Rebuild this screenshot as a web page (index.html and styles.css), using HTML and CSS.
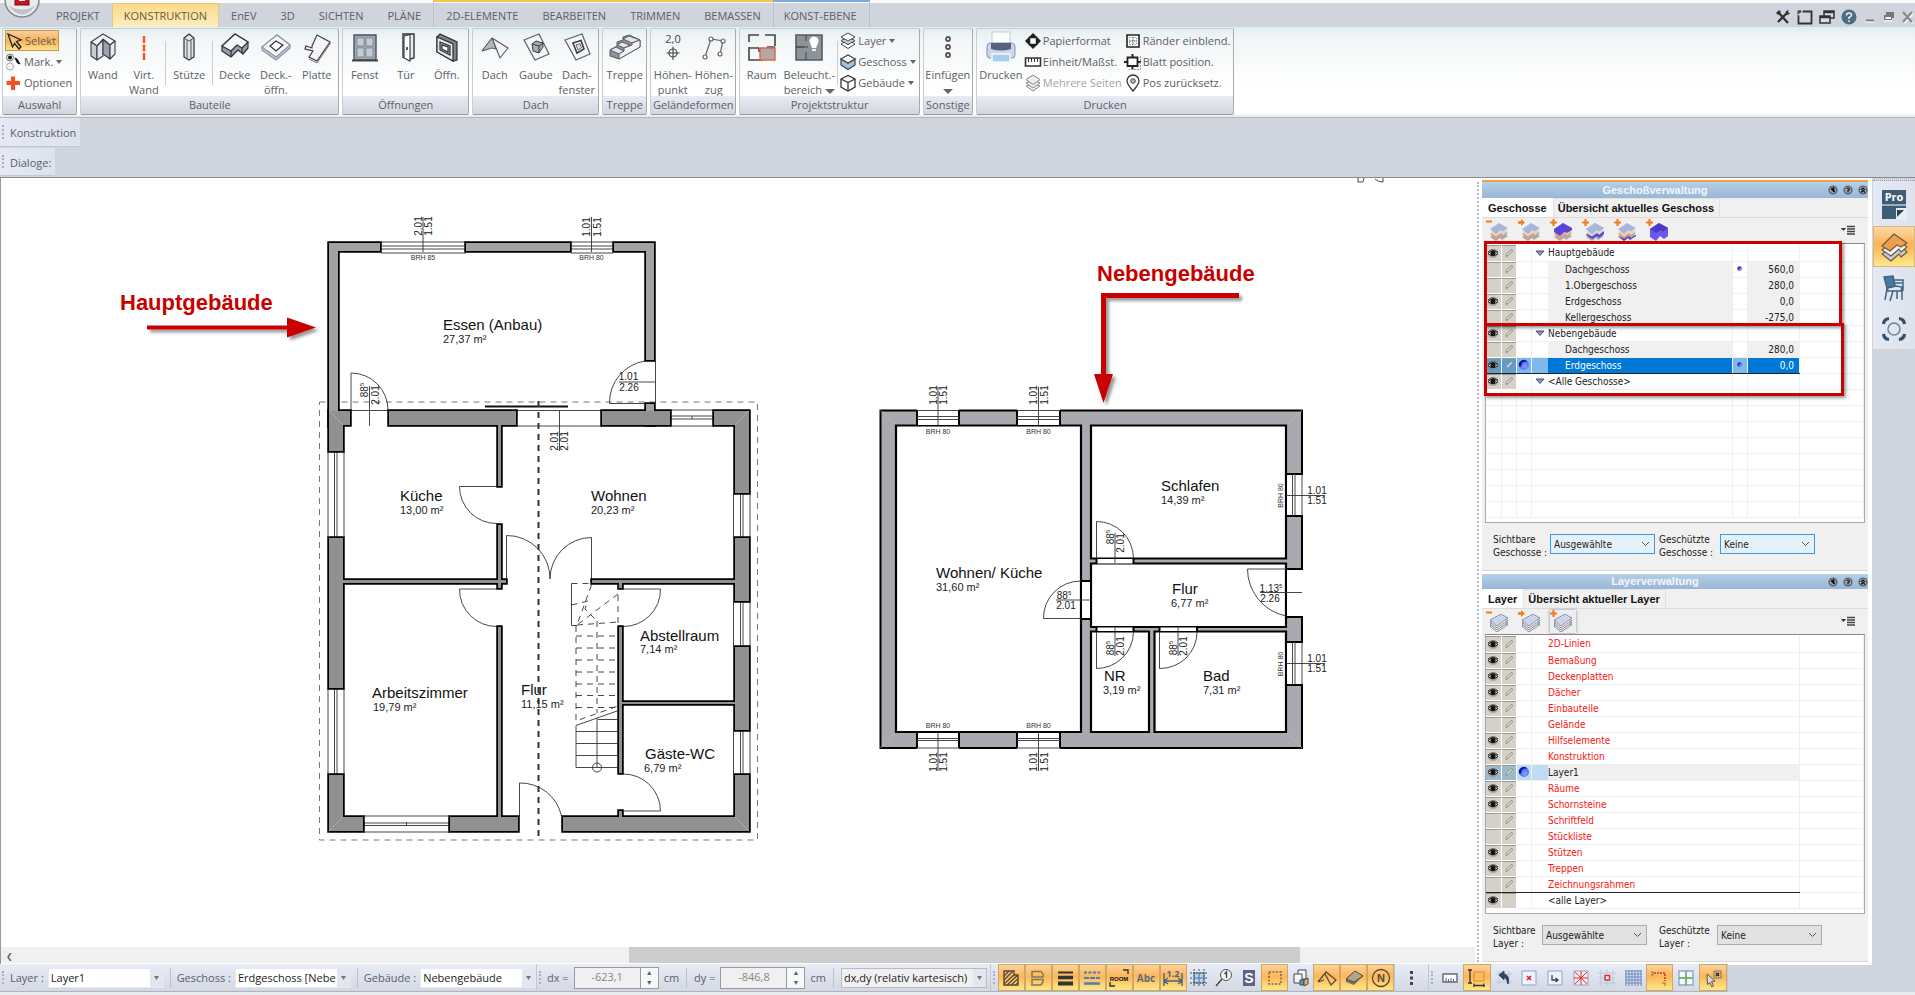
FILE: index.html
```html
<!DOCTYPE html>
<html lang="de">
<head>
<meta charset="utf-8">
<title>Geschoßverwaltung</title>
<link rel="stylesheet" href="styles.css">
</head>
<body>
<svg class="defs" aria-hidden="true">
  <symbol id="eye" viewBox="0 0 14 14"><ellipse cx="7" cy="8" rx="5" ry="4" fill="#8a8780" opacity=".6"/><path d="M2 7.5Q7 2 12 7.5Q7 12 2 7.5Z" fill="#e8e6e0" stroke="#222" stroke-width="1"/><circle cx="7" cy="7.2" r="2.6" fill="#111"/><path d="M2 6Q7 1.500 12 6" fill="none" stroke="#444"/></symbol>
  <symbol id="pen" viewBox="0 0 14 14"><path d="M4 10.500L4.500 8L9 3.500Q10.500 3 10.500 5L6 9.700Z" fill="#dcd8d0" stroke="#8d8a84" stroke-width=".9"/></symbol>
  <symbol id="ball" viewBox="0 0 14 14"><circle cx="7" cy="7" r="5" fill="#5a78ff"/><path d="M2.300 9A5 5 0 0 1 10.500 3.500Q4.500 3 4.500 7Q4 9 2.300 9Z" fill="#0a1a8c"/><circle cx="8" cy="8.500" r="2.500" fill="#7d93ff"/></symbol>
  <symbol id="dot" viewBox="0 0 14 14"><circle cx="6.500" cy="6.500" r="2.200" fill="#3535d8"/><circle cx="7.200" cy="7.200" r="1" fill="#9a9aff"/></symbol>
  <symbol id="tri" viewBox="0 0 14 14"><path d="M3 5H11L7 9.500Z" fill="#8e8edb" stroke="#444466" stroke-width=".9"/></symbol>
  <symbol id="pin" viewBox="0 0 10 10"><circle cx="5" cy="5" r="4.600" fill="#5d6673"/><circle cx="5" cy="5" r="3" fill="#99a5b3"/><path d="M3 4L6 2.500V7Z M5 5L7 7" stroke="#111" fill="#111"/></symbol>
  <symbol id="hlp" viewBox="0 0 10 10"><circle cx="5" cy="5" r="4.600" fill="#5d6673"/><circle cx="5" cy="5" r="3.200" fill="#99a5b3"/><path d="M3.500 4Q5 2 6.500 4Q6.500 5 5 5.500V7.500" stroke="#111" fill="none" stroke-width="1.200"/></symbol>
  <symbol id="col" viewBox="0 0 10 10"><circle cx="5" cy="5" r="4.600" fill="#5d6673"/><circle cx="5" cy="5" r="3.200" fill="#99a5b3"/><path d="M3 5L5 3L7 5M3 7.500L5 5.500L7 7.500" stroke="#111" fill="none" stroke-width="1.200"/></symbol>
  <symbol id="menu" viewBox="0 0 16 10"><path d="M1 3H6L3.500 6Z" fill="#333"/><path d="M7 1.500H15M7 4H15M7 6.500H15M7 9H15" stroke="#444" stroke-width="1.600"/></symbol>
  <symbol id="floors" viewBox="0 0 20 18"><path d="M1 14L10 8L19 13L13 17L11 15L7 18Z" fill="#a4abb8"/><path d="M1 11L11 6L19 10L14 14L12 12.500L7 16Z" fill="#ee9a5c"/><path d="M1 9L11 4L19 8L14 12L12 10L7 13.500Z" fill="#d6d9e0"/><path d="M1 6L10 0L19 5L14 8.500L11.500 7L7 11Z" fill="#a9b6d6"/></symbol>
  <symbol id="sheets" viewBox="0 0 20 18"><g stroke="#777d88" stroke-width=".9" fill="#f6f7fb"><path d="M1 12L12 8L19 10.500L8 18Z"/><path d="M1 10L12 6L19 8.500L8 16Z"/><path d="M1 8L12 4L19 6.500L8 14Z"/></g><path d="M1 6L12 0L19 4L8 12Z" fill="#cdd3e8" stroke="#858c9c" stroke-width=".9"/></symbol>
  <symbol id="plus" viewBox="0 0 7 7"><path d="M3.500 0V7M0 3.500H7" stroke="#f57c1f" stroke-width="2.200"/></symbol>
  <symbol id="minus" viewBox="0 0 7 7"><path d="M0 2.500H6" stroke="#f57c1f" stroke-width="2"/></symbol>
  <symbol id="arrow" viewBox="0 0 7 7"><path d="M0 3.500H4" stroke="#f57c1f" stroke-width="2.600"/><path d="M3 0L7 3.500L3 7Z" fill="#f57c1f"/></symbol>
</svg>

<header class="tabbar">
  <button class="app" aria-label="Anwendungsmenü"><svg viewBox="0 0 36 20" width="36" height="20"><circle cx="18" cy="0" r="17" fill="#e9ebee" stroke="#83868c" stroke-width="1.500"/><path d="M4 5Q18 24 32 5Q18 14 4 5Z" fill="#bfc3ca"/><rect x="11" y="-8" width="14" height="13" fill="#c3161c" stroke="#7c0c10"/><rect x="15" y="-2" width="6" height="3" fill="#fff"/></svg></button>
  <nav class="tabs">
    <button>PROJEKT</button><button class="on">KONSTRUKTION</button><button>EnEV</button><button>3D</button><button>SICHTEN</button><button>PLÄNE</button>
    <span class="ctx gold"><button>2D-ELEMENTE</button><button>BEARBEITEN</button><button>TRIMMEN</button><button>BEMASSEN</button></span>
    <span class="ctx blue"><button>KONST-EBENE</button></span>
  </nav>
  <div class="wintools">
    <button aria-label="Werkzeuge"><svg viewBox="0 0 16 16"><path d="M3 3L13 14M13 3L3 13" stroke="#333" stroke-width="2.400"/><path d="M1 4L4 1L6 3L3 6ZM11 2L14 1L12.500 3.500L15 4L13 6L10.500 5Z" fill="#333"/></svg></button>
    <button aria-label="Fenster"><svg viewBox="0 0 16 16"><path d="M1.500 2.500H14.500V14.500H1.500Z" stroke="#333" stroke-width="1.800" fill="none"/><path d="M5 1V6M1 5.500H5" stroke="#d0d4dd" stroke-width="1.500"/></svg></button>
    <button aria-label="Kaskade"><svg viewBox="0 0 16 16" fill="#d8dbe3" stroke="#333" stroke-width="1.500"><path d="M5 2H15V9H5ZM5 3.500H15"/><path d="M1 7H11V14H1ZM1 8.500H11"/></svg></button>
    <button aria-label="Hilfe"><svg viewBox="0 0 16 16"><circle cx="8" cy="8" r="7.500" fill="#4d6b82"/><path d="M5.500 6.500Q5.500 4 8 4Q10.500 4 10.500 6Q10.500 7.500 8 8.500V10M8 11.200V13" stroke="#e8edf0" stroke-width="1.600" fill="none"/></svg></button>
    <button aria-label="Minimieren"><svg viewBox="0 0 16 16"><path d="M3 11.500H11" stroke="#777" stroke-width="2"/><path d="M3 13H11" stroke="#fff"/></svg></button>
    <button class="near" aria-label="Wiederherstellen"><svg viewBox="0 0 16 16"><path d="M5 3H13V9H11V11H3V6H5Z" fill="#777"/><path d="M4.500 8H10V10H4.500Z" fill="#fff"/><path d="M3 12H11" stroke="#fff"/></svg></button>
    <button class="near" aria-label="Schließen"><svg viewBox="0 0 16 16"><path d="M5 4L14 14M14 4L5 14" stroke="#fff" stroke-width="2.200"/><path d="M4 3L13 13M13 3L4 13" stroke="#888" stroke-width="2.200"/></svg></button>
  </div>
</header>

<section class="ribbon">
  <div class="group">
    <div class="body col">
      <button class="row sel"><svg viewBox="0 0 18 18"><path d="M2 2L15 8L10.500 9.500L15 15L13 17L8.500 11.500L6.500 15Z" fill="#f5c27a" stroke="#222" stroke-width="1.300"/></svg>Selekt</button>
      <button class="row"><svg viewBox="0 0 18 18"><circle cx="5" cy="4.500" r="3.500" fill="#eee" stroke="#777"/><circle cx="5" cy="4.500" r="2" fill="#111"/><circle cx="5" cy="13.500" r="3.500" fill="#f6f6f6" stroke="#aaa"/><path d="M10 5L12 6L15 11L12.500 10Z" fill="#111" stroke="#111"/></svg>Mark. <i class="dd"></i></button>
      <button class="row"><svg viewBox="0 0 18 18"><path d="M8 2.500V16M1.500 9H15" stroke="#f4511e" stroke-width="4"/></svg>Optionen</button>
    </div><h2>Auswahl</h2>
  </div>
  <div class="group">
    <div class="body">
      <button class="big"><svg viewBox="0 0 30 30"><g stroke="#3d4048" stroke-width="1.100" stroke-linejoin="round"><path d="M3 10L15 2L27 9L22 13L15 7L9 14Z" fill="#f4f5f8"/><path d="M3 10L9 14V28L3 24Z" fill="#c9cbd3"/><path d="M9 14L15 8V24L9 28Z" fill="#dfe1e7"/><path d="M15 8L22 13V27L15 22Z" fill="#9ea2ad"/><path d="M22 13L27 9V22L22 27Z" fill="#e8e9ee"/></g></svg>Wand</button>
      <button class="big"><svg viewBox="0 0 30 30"><path d="M15 4V28" stroke="#f4511e" stroke-width="2.400" stroke-dasharray="7 1.500"/></svg>Virt.<br>Wand</button>
      <span class="sep"></span>
      <button class="big mid"><svg viewBox="0 0 30 30"><path d="M10 6L15 2L20 6V25L15 28L10 25Z" fill="#e2e4e9" stroke="#2e3036" stroke-width="1.200"/><path d="M10 6L15 9L20 6M13 8V26M17 8V26" fill="none" stroke="#55585f"/></svg>Stütze</button>
      <span class="sep"></span>
      <button class="big"><svg viewBox="0 0 30 30"><g stroke="#2f3238" stroke-width="1.200" stroke-linejoin="round"><path d="M2 14L15 2L28 10V16L23 22L18 18L11 25L2 19Z" fill="#9b9ea8"/><path d="M2 14L15 2L28 10L22 16L17 13L11 19Z" fill="#f6f7f9"/><path d="M11 19V25M22 16V21"/></g></svg>Decke</button>
      <button class="big"><svg viewBox="0 0 30 30"><g stroke="#8b93a5" stroke-width="1.100" stroke-linejoin="round"><path d="M1 15L16 3L29 13V16L15 28L1 18Z" fill="#c7ccd8"/><path d="M1 15L16 3L29 13L15 25Z" fill="#f8f9fb"/></g><path d="M9 14L15 9L22 13L15 19Z" fill="#fff" stroke="#333" stroke-width="1.200"/></svg>Deck.-<br>öffn.</button>
      <button class="big"><svg viewBox="0 0 30 30"><path d="M10 14L15 3L28 10L15 29L7 25L11 19L3 17L4 14L10 16Z" fill="#f5f5f7" stroke="#3b3e45" stroke-width="1.200"/><path d="M28 10V12L15 31L7 27" fill="none" stroke="#777"/></svg>Platte</button>
    </div><h2>Bauteile</h2>
  </div>
  <div class="group">
    <div class="body">
      <button class="big"><svg viewBox="0 0 30 30"><path d="M4 3H26V28H4Z" fill="#a1a7b0" stroke="#4d525b" stroke-width="1.400"/><path d="M7 6H14V14H7ZM16 6H23V14H16ZM7 16H14V25H7ZM16 16H23V25H16Z" fill="#c3cbd8" stroke="#6b7280" stroke-width=".6"/><path d="M2 28.500H28" stroke="#444" stroke-width="2"/></svg>Fenst</button>
      <button class="big"><svg viewBox="0 0 30 30"><path d="M12 26V2H23V26L19 27" fill="#e8e9ec" stroke="#33363c" stroke-width="1.400"/><path d="M13 4L19 2.500V29L13 26Z" fill="#fff" stroke="#33363c" stroke-width="1.100"/><path d="M16 15V18" stroke="#222" stroke-width="1.500"/></svg>Tür</button>
      <button class="big"><svg viewBox="0 0 30 30"><g stroke="#2c2f35" stroke-width="1.200"><path d="M5 5L8 2L25 10V28L21 29L5 20Z" fill="#7e828c"/><path d="M5 5L21 12V29L5 20Z" fill="#e6e8ec"/><path d="M8 10L18 14V23L8 18Z" fill="#a8acb5"/><path d="M10 13L16 15V20L10 17Z" fill="#fff"/></g></svg>Öffn.</button>
    </div><h2>Öffnungen</h2>
  </div>
  <div class="group">
    <div class="body">
      <button class="big"><svg viewBox="0 0 30 30"><path d="M2 19L12 6L28 16L20 26L12 6" fill="#f4f5f7" stroke="#55585f" stroke-width="1.100" stroke-linejoin="round"/><path d="M2 19L12 6L16 17L12 16Z" fill="#b3b6bd" stroke="#55585f"/></svg>Dach</button>
      <button class="big"><svg viewBox="0 0 30 30"><path d="M3 8L18 2L28 22L14 28Z" fill="#f5f6f8" stroke="#5c5f66" stroke-width="1.200"/><path d="M11 12L15 9L22 11V15L18 21L12 19Z" fill="#a6a9b1" stroke="#3a3d43"/><path d="M11 12L18 14V21M18 14L22 11" fill="none" stroke="#3a3d43"/></svg>Gaube</button>
      <button class="big"><svg viewBox="0 0 30 30"><path d="M3 8L20 2L28 22L14 28Z" fill="#f5f6f8" stroke="#5c5f66" stroke-width="1.200"/><path d="M11 11L19 8.500L22 17L15 21Z" fill="#fff" stroke="#3a3d43" stroke-width="1.600"/><path d="M14 13L18 11.500L19.500 16L16 18Z" fill="#ddd" stroke="#666"/></svg>Dach-<br>fenster</button>
    </div><h2>Dach</h2>
  </div>
  <div class="group">
    <div class="body">
      <button class="big"><svg viewBox="0 0 30 30"><g stroke="#5a5d64" stroke-width="1" stroke-linejoin="round"><path d="M0 18L7 14V10L13 8V5L19 3L30 8V15L9 27L0 24Z" fill="#8f929b"/><path d="M0 18L6 15L14 19L9 22ZM7 13L12 10L20 13L14 16ZM13 7L19 4L30 8L22 11Z" fill="#e3e5ea"/><path d="M9 22L14 19V16L22 13V11L30 8V15L9 27Z" fill="#f3f4f6"/></g></svg>Treppe</button>
    </div><h2>Treppe</h2>
  </div>
  <div class="group">
    <div class="body">
      <button class="big"><svg viewBox="0 0 30 30"><text x="15" y="11" text-anchor="middle" class="ictext">2,0</text><circle cx="15" cy="21" r="4" fill="none" stroke="#444" stroke-width="1.200"/><path d="M15 14.500V28M8.500 21H21.500" stroke="#444" stroke-width="1.100"/></svg>Höhen-<br>punkt</button>
      <button class="big"><svg viewBox="0 0 30 30"><path d="M6 25L12 7L24 9L21 22" fill="none" stroke="#666" stroke-width="1.200"/><g fill="#fff" stroke="#666" stroke-width="1.200"><circle cx="6" cy="25" r="2"/><circle cx="12" cy="7" r="2"/><circle cx="24" cy="9" r="2"/><circle cx="21" cy="22" r="2"/></g></svg>Höhen-<br>zug</button>
    </div><h2>Geländeformen</h2>
  </div>
  <div class="group">
    <div class="body">
      <button class="big"><svg viewBox="0 0 30 30"><path d="M2 10V3H12M18 3H28V14M2 15V28H16M2 16H12M20 15H28M12 16V20" fill="none" stroke="#444" stroke-width="1.600"/><path d="M13 16H28V28H13Z" fill="#b8a6a4" stroke="#d2694a" stroke-width="1.400"/></svg>Raum</button>
      <button class="big wide"><svg viewBox="0 0 30 30"><path d="M2 3H28V28H2Z" fill="#8d9499" stroke="#555b60" stroke-width="1.600"/><path d="M2 15H10M12 3V9M12 20V28M2 15H14" stroke="#444"/><path d="M16 11A4.500 4.500 0 1 1 24 11L22 16H18Z" fill="#fff"/><path d="M18 17H22V19H18Z" fill="#eee"/></svg>Beleucht.-<br>bereich <i class="dd lg"></i></button>
      <span class="sep"></span>
      <div class="col">
        <button class="row"><svg viewBox="0 0 18 18" fill="#fff" stroke="#444"><path d="M2 12L9 8L16 12L9 16.500Z"/><path d="M2 8.500L9 5L16 8.500L9 12.500Z" fill="#b9d3e6"/><path d="M2 5L9 1L16 5L9 9Z"/></svg>Layer <i class="dd"></i></button>
        <button class="row"><svg viewBox="0 0 18 18" fill="#9cc3e0" stroke="#444" stroke-width="1.200"><path d="M2 6V12L9 16.500L16 12V6L9 10Z"/><path d="M2 6L9 2L16 6L9 10Z" fill="#fff"/></svg>Geschoss <i class="dd"></i></button>
        <button class="row"><svg viewBox="0 0 18 18" fill="#fff" stroke="#333" stroke-width="1.300"><path d="M2 5L9 1.500L16 5V13L9 17L2 13Z"/><path d="M2 5L9 8.500L16 5M9 8.500V17"/></svg>Gebäude <i class="dd"></i></button>
      </div>
    </div><h2>Projektstruktur</h2>
  </div>
  <div class="group">
    <div class="body">
      <button class="big insert"><svg viewBox="0 0 30 30" fill="#fff" stroke="#555" stroke-width="1.800"><circle cx="15" cy="7" r="2"/><circle cx="15" cy="15" r="2"/><circle cx="15" cy="23" r="2"/></svg>Einfügen<br><i class="dd lg"></i></button>
    </div><h2>Sonstige</h2>
  </div>
  <div class="group">
    <div class="body">
      <button class="big insert"><svg viewBox="0 0 30 30"><path d="M6 0H24V14H6Z" fill="#fbfcfe" stroke="#c5cad6"/><path d="M1 15Q1 11 4 11H26Q29 11 29 15V23Q29 26 26 26H4Q1 26 1 23Z" fill="#ccd6ea" stroke="#8593b3"/><path d="M5 11H25V17Q15 20 5 17Z" fill="#56627f"/><path d="M6 22H24V30H6Z" fill="#a8cbf2" stroke="#f4f7fb" stroke-width="1.500"/></svg>Drucken</button>
      <div class="col">
        <button class="row"><svg viewBox="0 0 18 18"><path d="M9 1L13 5H5ZM9 17L13 13H5ZM1 9L5 5V13ZM17 9L13 5V13Z" fill="#222"/><path d="M5.500 5.500H12.500V12.500H5.500Z" fill="#fff" stroke="#222" stroke-width="1.500"/></svg>Papierformat</button>
        <button class="row"><svg viewBox="0 0 18 18"><path d="M1.500 5H16.500V13H1.500Z" fill="#fff" stroke="#333" stroke-width="1.600"/><path d="M4.500 5V9M7.500 5V9M10.500 5V9M13.500 5V9" stroke="#333"/></svg>Einheit/Maßst.</button>
        <button class="row" disabled><svg viewBox="0 0 18 18" fill="#eee" stroke="#888"><path d="M2 12L9 9L16 12L9 17Z"/><path d="M2 9L9 6L16 9L9 14Z"/><path d="M2 5.500L9 1L16 5.500L9 10.500Z"/></svg>Mehrere Seiten</button>
      </div>
      <div class="col">
        <button class="row"><svg viewBox="0 0 18 18"><path d="M3 3H15V15H3Z" fill="#fff" stroke="#222" stroke-width="1.600"/><path d="M9 5V13M5 9H13" stroke="#444" stroke-dasharray="1.500 1"/><path d="M5.500 5.500H12.500V12.500H5.500Z" fill="none" stroke="#777" stroke-dasharray="1 1.500"/></svg>Ränder einblend.</button>
        <button class="row"><svg viewBox="0 0 18 18"><path d="M3.500 4.500H13.500V13H3.500Z" fill="#fff" stroke="#222" stroke-width="1.800"/><path d="M8.500 1V4M8.500 13V16.500M0 9H3M14 9H17" stroke="#222" stroke-width="2"/><path d="M16.500 3V16.500H5" fill="none" stroke="#999" stroke-dasharray="2 1"/></svg>Blatt position.</button>
        <button class="row"><svg viewBox="0 0 18 18"><path d="M9 17Q3 10 3 7A6 6 0 0 1 15 7Q15 10 9 17Z" fill="#fff" stroke="#333" stroke-width="1.300"/><circle cx="9" cy="7" r="2.300" fill="#bbb" stroke="#444"/></svg>Pos zurücksetz.</button>
      </div>
    </div><h2>Drucken</h2>
  </div>
</section>

<div class="dock"><div class="strip">Konstruktion</div><div class="strip">Dialoge:</div></div>

<main class="work">
  <section class="canvas">
    <svg class="plan" viewBox="1 177 1474 768" preserveAspectRatio="xMinYMin meet">
      <defs>
        <filter id="sh" x="-20%" y="-20%" width="150%" height="150%"><feDropShadow dx="3" dy="3" stdDeviation="1.500" flood-color="#000" flood-opacity=".4"/></filter>
        <path id="w1" d="M329 242H380V250H338V425H329ZM466 242H570V250H466ZM614 242H654V359H646V250H614ZM646 403H654V424H646Z"/>
        <path id="w2" d="M329 410H350V424H343V450H329ZM389 410H516V424H389ZM602 410H670V424H602ZM714 410H749V492H735V424H714ZM329 537H343V687H329ZM329 774H343V816H363V830H329ZM735 537H749V600H735ZM735 646H749V729H735ZM735 774H749V830H735ZM450 816H518V830H450ZM563 816H749V830H563ZM498 424H501V485H498ZM498 524H501V587H498ZM498 626H501V817H498ZM343 579H506V582H343ZM592 579H735V582H592ZM619 582H622V587H619ZM619 626H622V772H619ZM619 810H622V817H619ZM622 701H735V703H622Z"/>
      </defs>
      <path d="M1358 181H1363L1364 177M1358 181V177M1375 178Q1378 181 1383 181V177" class="thin"/>

      <!-- Hauptgebäude -->
      <path class="roof" d="M319.500 401H757.500V839H319.500Z"/>
      <path class="thin" d="M381 241H466M381 252H466M381 245H466M381 248H466M423 216V251M571 241H613M571 252H613M571 245H613M571 248H613M591.500 216V251M671 409H714M671 425H714M671 415H714M671 418H714M692 415V418M655.500 360V402M328 451V536M344 451V536M334.500 451V536M337 451V536M328 688V773M344 688V773M334.500 688V773M337 688V773M750 493V536M733.500 493V536M740.500 493V536M743 493V536M750 601V645M733.500 601V645M740.500 601V645M743 601V645M750 730V773M733.500 730V773M740.500 730V773M743 730V773M364 815H449M364 831H449M364 822H449M364 824.500H449M406.500 821V825"/>
      <path class="thin" d="M338 409.500H388M517 409.500H602M517 425H602M351 409V372A37 37 0 0 1 388 409M369.500 385V425M645 360A42 42 0 0 0 609.500 402.500H655M619 381H655M559.500 410V450M497 485.500H459.500A37 37 0 0 0 497 522.500M497 588H459.500A37 37 0 0 0 497 625.500M506.500 578V534.500A43 43 0 0 1 550 578A41.500 41.500 0 0 1 591.500 536.500V578M623 588H660.500A37 37 0 0 1 623 625.500M623 810H660.500A37 37 0 0 0 623 773M519.500 816V782A42 42 0 0 1 561.500 815"/>
      <path d="M485 405.500H568" stroke="#111" stroke-width="2"/>
      <use href="#w1" class="wall-line"/><use href="#w2" class="wall-line"/><use href="#w1" fill="#a2a2a2"/><use href="#w2" fill="#919191"/>
      <path class="ridge" d="M538.500 400V839"/>
      <path d="M329 410L343 424M749 410L735 424M329 830L343 816M749 830L735 816" stroke="#b5b5b5" stroke-width=".7"/>
      <path class="thin" d="M576 766.500V724.500L617 710M576 730.500H617M576 742.500H617M576 754.500H617M576 766.500H617M598 718.500H617M597 717V766"/><circle cx="597" cy="766.500" r="4.500" class="thin"/>
      <path class="thin dash" d="M576 635H617M576 647H617M576 659H617M576 671H617M576 683H617M576 694.500H617M576 706.500H617M576 625V720L618 705M597 620V712M571.500 582.500H592L577 624L618 593M577 624L618 621M618 583V622M571.500 604L588 600L585 608L597 620"/>
      <path class="thin" d="M571.500 582.500V624.500H577"/>
      <g class="room">
        <text x="443" y="329">Essen (Anbau)</text><text x="400" y="500">Küche</text><text x="591" y="500">Wohnen</text><text x="372" y="697">Arbeitszimmer</text><text x="521" y="694">Flur</text><text x="640" y="640">Abstellraum</text><text x="645" y="758">Gäste-WC</text>
      </g>
      <g class="area">
        <text x="443" y="342">27,37 m²</text><text x="400" y="513">13,00 m²</text><text x="591" y="513">20,23 m²</text><text x="373" y="710">19,79 m²</text><text x="521" y="707">11,15 m²</text><text x="640" y="652">7,14 m²</text><text x="644" y="771">6,79 m²</text>
      </g>
      <g class="brh"><text x="423" y="259">BRH 85</text><text x="591.500" y="259">BRH 80</text></g>
      <g class="dim">
        <text transform="translate(422 225) rotate(-90)">2.01</text><text transform="translate(432 225) rotate(-90)">1.51</text>
        <text transform="translate(590 226) rotate(-90)">1.01</text><text transform="translate(601 226) rotate(-90)">1.51</text>
        <text transform="translate(368 389) rotate(-90)">88<tspan class="sup" dy="-4">5</tspan></text><text transform="translate(379 394) rotate(-90)">2.01</text>
        <text transform="translate(558 440) rotate(-90)">2.01</text><text transform="translate(568 440) rotate(-90)">2.01</text>
        <text x="628.500" y="379">1.01</text><text x="629" y="390">2.26</text>
      </g>

      <!-- Nebengebäude -->
      <path d="M880.500 409.500H1302V747H880.500Z" fill="#a9a9af" stroke="#000" stroke-width="2"/>
      <path d="M880.500 409.500L896 424M1302 409.500L1286 424M880.500 747L896 731M1302 747L1286 731" stroke="#bcbcc2" stroke-width=".7"/>
      <path d="M896 424.500H1081V731H896ZM1091 424.500H1286V557.500H1091ZM1091 562.500H1286V626H1091ZM1091 630.500H1149V731H1091ZM1154.500 630.500H1286V731H1154.500Z" fill="#fff" stroke="#000" stroke-width="2.200"/>
      <path d="M917 408H959V424H917ZM1017 408H1060V424H1017ZM917 732H959V748H917ZM1017 732H1060V748H1017ZM1287 473H1303V515H1287ZM1287 641H1303V684H1287ZM1287 568H1304V616H1287Z" fill="#fff"/>
      <path d="M1097 558H1133V562.500H1097ZM1097 626.500H1133V630H1097ZM1160 626.500H1197V630H1160ZM1082 580H1090V618H1082Z" fill="#fff"/>
      <path d="M917 409V424M959 409V424M1017 409V424M1060 409V424M917 731V747M959 731V747M1017 731V747M1060 731V747M1286 473H1303M1286 515H1303M1286 641H1303M1286 684H1303M1286 568H1303M1286 616H1303M1096.500 557V563M1133.500 557V563M1096.500 625V631M1133.500 625V631M1159.500 625V631M1197 625V631M1081 580H1091M1081 618H1091" stroke="#000" stroke-width="2"/>
      <path class="thin" d="M917 409.500H959M917 415.500H959M917 418.500H959M938 386V424M1017 409.500H1060M1017 415.500H1060M1017 418.500H1060M1038.500 386V424M917 737.500H959M917 739.500H959M917 747H959M938 731V770M1017 737.500H1060M1017 739.500H1060M1017 747H1060M1038.500 731V770M1292.500 473V515M1295 473V515M1302 473V515M1286 494.500H1325M1292.500 641V684M1295 641V684M1302 641V684M1286 662.500H1325M1115 532V562M1115 626V655M1178 626V655M1096.500 557V520.500A37 37 0 0 1 1133.500 557M1096.500 631V667.500A37 37 0 0 0 1133.500 631M1159.500 631V667.500A37 37 0 0 0 1197 631M1081 580A37 37 0 0 0 1043.500 617.500H1081M1056 599H1090M1286 568H1247.500A48 48 0 0 0 1286 615M1260 591.500H1302"/>
      <g class="room"><text x="936" y="577">Wohnen/ Küche</text><text x="1161" y="490">Schlafen</text><text x="1172" y="593">Flur</text><text x="1104" y="680">NR</text><text x="1203" y="680">Bad</text></g>
      <g class="area"><text x="936" y="590">31,60 m²</text><text x="1161" y="503">14,39 m²</text><text x="1171" y="606">6,77 m²</text><text x="1103" y="693">3,19 m²</text><text x="1203" y="693">7,31 m²</text></g>
      <g class="brh"><text x="938" y="433">BRH 80</text><text x="1038.500" y="433">BRH 80</text><text x="938" y="727">BRH 80</text><text x="1038.500" y="727">BRH 80</text><text transform="translate(1283 494.500) rotate(-90)">BRH 80</text><text transform="translate(1283 663) rotate(-90)">BRH 80</text></g>
      <g class="dim">
        <text transform="translate(937 394) rotate(-90)">1.01</text><text transform="translate(947 394) rotate(-90)">1.51</text><text transform="translate(1037 394) rotate(-90)">1.01</text><text transform="translate(1048 394) rotate(-90)">1.51</text>
        <text transform="translate(937 761) rotate(-90)">1.01</text><text transform="translate(947 761) rotate(-90)">1.51</text><text transform="translate(1037 761) rotate(-90)">1.01</text><text transform="translate(1048 761) rotate(-90)">1.51</text>
        <text x="1317" y="493">1.01</text><text x="1317" y="503">1.51</text><text x="1317" y="661">1.01</text><text x="1317" y="671">1.51</text>
        <text x="1064" y="598">88<tspan class="sup" dy="-4">5</tspan></text><text x="1066" y="608">2.01</text>
        <text x="1271" y="591">1.13<tspan class="sup" dy="-4">5</tspan></text><text x="1270" y="601">2.26</text>
        <text transform="translate(1114 536) rotate(-90)">88<tspan class="sup" dy="-4">5</tspan></text><text transform="translate(1124 542) rotate(-90)">2.01</text>
        <text transform="translate(1114 647) rotate(-90)">88<tspan class="sup" dy="-4">5</tspan></text><text transform="translate(1124 645) rotate(-90)">2.01</text>
        <text transform="translate(1177 647) rotate(-90)">88<tspan class="sup" dy="-4">5</tspan></text><text transform="translate(1187 645) rotate(-90)">2.01</text>
      </g>
      <g class="note">
        <text x="120" y="309">Hauptgebäude</text><text x="1097" y="280">Nebengebäude</text>
        <path filter="url(#sh)" d="M147 324.500H287V316.500L316 326.500L287 336.500V328.500H147Z"/>
        <path filter="url(#sh)" d="M1101 292H1239V297H1106V373H1113L1103.500 402L1094 373H1101Z"/>
      </g>
    </svg>
    <div class="hscroll"><button aria-label="Nach links">❮</button><div class="track"><div class="thumb"></div></div></div>
  </section>

  <aside class="panels">
    <section class="panel">
      <header><h3>Geschoßverwaltung</h3><span class="ctl"><svg><use href="#pin"/></svg><svg><use href="#hlp"/></svg><svg><use href="#col"/></svg></span></header>
      <div class="ptabs"><button class="on">Geschosse</button><button>Übersicht aktuelles Geschoss</button></div>
      <div class="ptools">
        <button aria-label="Geschoss löschen"><svg class="m"><use href="#minus"/></svg><svg class="f"><use href="#floors"/></svg></button>
        <button aria-label="Geschoss verschieben"><svg class="m"><use href="#arrow"/></svg><svg class="f"><use href="#floors"/></svg></button>
        <button aria-label="Geschoss oben einfügen"><svg class="m"><use href="#plus"/></svg><svg class="f" viewBox="0 0 20 18"><use href="#floors"/><path d="M1 6L10 0L19 5V7L14 10L11.500 9L7 13L1 9Z" fill="#5a45d8"/></svg></button>
        <button aria-label="Geschoss einfügen"><svg class="m"><use href="#plus"/></svg><svg class="f" viewBox="0 0 20 18"><use href="#floors"/><path d="M2 11L7 13.500L12 10L14 12L19 8V11L14 15L12 13L7 16L1 12Z" fill="#5a45d8"/><path d="M1 6L10 0L19 5L14 8.500L11.500 7L7 11Z" fill="#a9b6d6"/></svg></button>
        <button aria-label="Geschoss unten einfügen"><svg class="m"><use href="#plus"/></svg><svg class="f" viewBox="0 0 20 18"><use href="#floors"/><path d="M1 13L7 15.500L12 13L14 15L19 11.500V13L13 17L11 15L7 18Z" fill="#5a45d8"/></svg></button>
        <button aria-label="Gebäude einfügen"><svg class="m"><use href="#plus"/></svg><svg class="f" viewBox="0 0 20 18"><path d="M1 6L10 0L19 5V13L15 16L11 13L7 18L1 14Z" fill="#6a58ea"/><path d="M1 6L10 0L19 5L14 8.500L11.500 7L7 10Z" fill="#4a3ac4"/></svg></button>
        <svg class="more"><use href="#menu"/></svg>
      </div>
      <div class="tablebox">
        <table class="floors">
          <colgroup><col class="c1"><col class="c1"><col class="c1"><col class="c2"><col><col class="c1"><col class="c5"><col class="c6"></colgroup>
          <tr><td class="b"><svg><use href="#eye"/></svg><td class="b"><svg><use href="#pen"/></svg><td><td class="t"><svg><use href="#tri"/></svg><td>Hauptgebäude<td><td><td>
          <tr><td class="b"><td class="b"><svg><use href="#pen"/></svg><td><td><td class="g ch">Dachgeschoss<td><svg><use href="#dot"/></svg><td class="g n">560,0<td>
          <tr><td class="b"><td class="b"><svg><use href="#pen"/></svg><td><td><td class="g ch">1.Obergeschoss<td><td class="g n">280,0<td>
          <tr><td class="b"><svg><use href="#eye"/></svg><td class="b"><svg><use href="#pen"/></svg><td><td><td class="g ch">Erdgeschoss<td><td class="g n">0,0<td>
          <tr><td class="b"><td class="b"><svg><use href="#pen"/></svg><td><td><td class="g ch">Kellergeschoss<td><td class="g n">-275,0<td>
          <tr><td class="b"><svg><use href="#eye"/></svg><td class="b"><svg><use href="#pen"/></svg><td><td class="t"><svg><use href="#tri"/></svg><td>Nebengebäude<td><td><td>
          <tr><td class="b"><td class="b"><svg><use href="#pen"/></svg><td><td><td class="g ch">Dachgeschoss<td><td class="g n">280,0<td>
          <tr class="cur"><td class="b"><svg><use href="#eye"/></svg><td class="b"><svg><use href="#pen"/></svg><td><svg><use href="#ball"/></svg><td><td class="g ch">Erdgeschoss<td><svg><use href="#dot"/></svg><td class="g n">0,0<td>
          <tr><td class="b"><svg><use href="#eye"/></svg><td class="b"><svg><use href="#pen"/></svg><td><td class="t"><svg><use href="#tri"/></svg><td>&lt;Alle Geschosse&gt;<td><td><td>
          <tr><td><td><td><td><td><td><td><td>
          <tr><td><td><td><td><td><td><td><td>
          <tr><td><td><td><td><td><td><td><td>
          <tr><td><td><td><td><td><td><td><td>
          <tr><td><td><td><td><td><td><td><td>
          <tr><td><td><td><td><td><td><td><td>
          <tr><td><td><td><td><td><td><td><td>
          <tr><td><td><td><td><td><td><td><td>
        </table>
        <span class="mark one"></span><span class="mark two"></span>
      </div>
      <div class="pfoot blue">
        <label for="sg">Sichtbare<br>Geschosse :</label><select id="sg"><option>Ausgewählte</option></select>
        <label for="gg" class="second">Geschützte<br>Geschosse :</label><select id="gg" class="short"><option>Keine</option></select>
      </div>
    </section>

    <section class="panel">
      <header><h3>Layerverwaltung</h3><span class="ctl"><svg><use href="#pin"/></svg><svg><use href="#hlp"/></svg><svg><use href="#col"/></svg></span></header>
      <div class="ptabs"><button class="on">Layer</button><button>Übersicht aktueller Layer</button></div>
      <div class="ptools">
        <button aria-label="Layer löschen"><svg class="m"><use href="#minus"/></svg><svg class="f"><use href="#sheets"/></svg></button>
        <button aria-label="Layer verschieben"><svg class="m"><use href="#arrow"/></svg><svg class="f"><use href="#sheets"/></svg></button>
        <button class="raised" aria-label="Layer einfügen"><svg class="m"><use href="#plus"/></svg><svg class="f"><use href="#sheets"/></svg></button>
        <svg class="more"><use href="#menu"/></svg>
      </div>
      <div class="tablebox">
        <table class="layers">
          <colgroup><col class="c1"><col class="c1"><col class="c1"><col class="c2"><col><col class="c6"></colgroup>
          <tr><td class="b"><svg><use href="#eye"/></svg><td class="b"><svg><use href="#pen"/></svg><td><td><td>2D-Linien<td>
          <tr><td class="b"><svg><use href="#eye"/></svg><td class="b"><svg><use href="#pen"/></svg><td><td><td>Bemaßung<td>
          <tr><td class="b"><svg><use href="#eye"/></svg><td class="b"><svg><use href="#pen"/></svg><td><td><td>Deckenplatten<td>
          <tr><td class="b"><svg><use href="#eye"/></svg><td class="b"><svg><use href="#pen"/></svg><td><td><td>Dächer<td>
          <tr><td class="b"><svg><use href="#eye"/></svg><td class="b"><svg><use href="#pen"/></svg><td><td><td>Einbauteile<td>
          <tr><td class="b"><td class="b"><svg><use href="#pen"/></svg><td><td><td>Gelände<td>
          <tr><td class="b"><svg><use href="#eye"/></svg><td class="b"><svg><use href="#pen"/></svg><td><td><td>Hilfselemente<td>
          <tr><td class="b"><svg><use href="#eye"/></svg><td class="b"><svg><use href="#pen"/></svg><td><td><td>Konstruktion<td>
          <tr class="act"><td class="b"><svg><use href="#eye"/></svg><td class="b"><svg><use href="#pen"/></svg><td><svg><use href="#ball"/></svg><td><td class="g">Layer1<td>
          <tr><td class="b"><svg><use href="#eye"/></svg><td class="b"><svg><use href="#pen"/></svg><td><td><td>Räume<td>
          <tr><td class="b"><svg><use href="#eye"/></svg><td class="b"><svg><use href="#pen"/></svg><td><td><td>Schornsteine<td>
          <tr><td class="b"><td class="b"><svg><use href="#pen"/></svg><td><td><td>Schriftfeld<td>
          <tr><td class="b"><td class="b"><svg><use href="#pen"/></svg><td><td><td>Stückliste<td>
          <tr><td class="b"><svg><use href="#eye"/></svg><td class="b"><svg><use href="#pen"/></svg><td><td><td>Stützen<td>
          <tr><td class="b"><svg><use href="#eye"/></svg><td class="b"><svg><use href="#pen"/></svg><td><td><td>Treppen<td>
          <tr class="last"><td class="b"><td class="b"><svg><use href="#pen"/></svg><td><td><td>Zeichnungsrahmen<td>
          <tr class="all"><td class="b"><svg><use href="#eye"/></svg><td class="b"><td><td><td>&lt;alle Layer&gt;<td>
        </table>
      </div>
      <div class="pfoot">
        <label for="sl" class="narrow">Sichtbare<br>Layer :</label><select id="sl"><option>Ausgewählte</option></select>
        <label for="gl" class="third">Geschützte<br>Layer :</label><select id="gl"><option>Keine</option></select>
      </div>
    </section>
  </aside>

  <nav class="side">
    <button aria-label="Pro"><svg viewBox="0 0 30 36"><path d="M3 3H27V32H3Z" fill="#3f5c76"/><path d="M3 18H27" stroke="#fff"/><text x="15" y="14" text-anchor="middle" class="pro">Pro</text><path d="M17 21H28V33H17Z" fill="#e8eef5"/><path d="M18 23H25L18 30Z" fill="#2b4258"/></svg></button>
    <button class="on" aria-label="Geschosse"><svg viewBox="0 0 30 30" stroke="#6b5a45" stroke-width="1.200" stroke-linejoin="round"><path d="M3 22L8 19L22 14L28 20L22 25L20 22L12 29Z" fill="#c9cbd0"/><path d="M3 18L8 14L22 11L28 15L22 20L20 17L12 24Z" fill="#f2f2f2"/><path d="M3 14L15 2L28 11L22 15L18 13L11 19Z" fill="#ef9f4b"/></svg></button>
    <button aria-label="Möbel"><svg viewBox="0 0 30 30" fill="none" stroke="#3f6483" stroke-width="1.500"><path d="M5 4L14 3L16 13L8 15Z" fill="#46799f"/><path d="M8 15L17 13L23 14L22 18L9 18ZM15 7H24V18M8 16L6 27M14 18L11 28M23 17V27M18 18L18 26M14 10H23"/></svg></button>
    <button aria-label="Zoom alles"><svg viewBox="0 0 30 30" fill="none" stroke="#33506b"><circle cx="15" cy="15" r="6" stroke-width="1.500" stroke="#6d8499"/><path d="M4.500 10Q5 5 10 4.500M20 4.500Q25 5 25.500 10M25.500 20Q25 25 20 25.500M10 25.500Q5 25 4.500 20" stroke-width="3.200"/></svg></button>
  </nav>
</main>

<footer class="status">
  <div class="bar fields">
    <label for="s1">Layer :</label><select id="s1"><option>Layer1</option></select><span class="vs"></span>
    <label for="s2">Geschoss :</label><select id="s2"><option>Erdgeschoss [Nebengebäude]</option></select><span class="vs"></span>
    <label for="s3">Gebäude :</label><select id="s3"><option>Nebengebäude</option></select>
  </div>
  <div class="bar coords">
    <label for="dx">dx =</label><span class="spin"><input id="dx" value="-623,1"><span><button aria-label="mehr">▲</button><button aria-label="weniger">▼</button></span></span><span class="unit">cm</span><span class="vs"></span>
    <label for="dy">dy =</label><span class="spin"><input id="dy" value="-846,8"><span><button aria-label="mehr">▲</button><button aria-label="weniger">▼</button></span></span><span class="unit">cm</span><span class="vs"></span>
    <select class="mode" aria-label="Koordinaten"><option>dx,dy (relativ kartesisch)</option></select>
  </div>
  <div class="bar icons">
    <button class="on" aria-label="Schraffur"><svg viewBox="0 0 20 20"><path d="M3 3H13V7H17V17H3Z" fill="none" stroke="#54493a" stroke-width="1.400"/><path d="M3 8L8 3M3 12L12 3M3 16L14 6M6 17L17 7M10 17L17 11M14 17L17 15" stroke="#54493a" stroke-width="1.300"/></svg></button>
    <button class="on" aria-label="Kontur"><svg viewBox="0 0 20 20" fill="none" stroke="#7c7c5c" stroke-width="1.500"><path d="M4 3.500H13L15 6V9H4ZM4 11.500H15V14L13 17H4Z"/></svg></button>
    <button class="on" aria-label="Linienstärke"><svg viewBox="0 0 20 20" stroke="#333"><path d="M3 4.500H18" stroke-width="2"/><path d="M3 9.500H18" stroke-width="3.500"/><path d="M3 15.500H18" stroke-width="4"/></svg></button>
    <button class="on" aria-label="Linienart"><svg viewBox="0 0 20 20" stroke="#4d7bb5" stroke-width="2"><path d="M2 4.500H18" stroke-dasharray="3 1.500"/><path d="M2 10H18" stroke-dasharray="5 1"/><path d="M2 15.500H18" stroke-width="2.500"/></svg></button>
    <button class="on" aria-label="Raumtext"><svg viewBox="0 0 20 20"><path d="M14 2H19V6M1 14V18H6" fill="none" stroke="#333" stroke-width="1.400"/><text x="10" y="13" text-anchor="middle" class="tiny">ROOM</text></svg></button>
    <button class="on" aria-label="Text"><svg viewBox="0 0 20 20"><text x="10" y="14" text-anchor="middle" class="abc">Abc</text></svg></button>
    <button class="on" aria-label="Maße"><svg viewBox="0 0 20 20"><text x="10" y="9" text-anchor="middle" class="num">1.2</text><path d="M1 5V18M19 5V18M1 13H19M5 10L1 13L5 16M15 10L19 13L15 16" fill="none" stroke="#47647f" stroke-width="1.400"/></svg></button>
    <button aria-label="Raster"><svg viewBox="0 0 20 20" fill="none" stroke="#455"><path d="M5 5H15V15H5Z" fill="#b9d0e8" stroke="#4977a8"/><path d="M10 5V15M5 10H15" stroke="#4977a8"/><path d="M5 1V19M15 1V19M1 5H19M1 15H19M10 1V4M10 16V19M1 10H4M16 10H19" stroke-dasharray="2 1"/></svg></button>
    <button aria-label="Marker"><svg viewBox="0 0 20 20"><circle cx="12" cy="7" r="5.500" fill="#f4f6fa" stroke="#555"/><path d="M8 11L2 18M10.500 6L12.500 4V10" fill="none" stroke="#444" stroke-width="1.400"/></svg></button>
    <button aria-label="S"><svg viewBox="0 0 20 20"><path d="M4 2H16V18H4Z" fill="#5c6484"/><text x="10" y="15" text-anchor="middle" class="ess">S</text></svg></button>
    <button class="on" aria-label="Auswahlrahmen"><svg viewBox="0 0 20 20"><path d="M4 4H16V16H4Z" fill="none" stroke="#765" stroke-width="1.500" stroke-dasharray="2 1.500"/></svg></button>
    <button aria-label="Kopien"><svg viewBox="0 0 20 20" fill="#f5f6f8" stroke="#444"><path d="M7 2H15V11H7Z"/><path d="M3 6H11V15H3Z"/><path d="M9 12H13V17H9Z" fill="#4aa0d0"/><path d="M13 12L17 10V16L13 18Z" fill="#e8b64a"/></svg></button>
    <button class="on" aria-label="Dachansicht"><svg viewBox="0 0 20 20" fill="none" stroke="#54493a" stroke-width="1.300"><path d="M1 14L9 4L19 12L14 17L8 6M1 14L7 12"/></svg></button>
    <button class="on" aria-label="Platte"><svg viewBox="0 0 20 20"><path d="M2 11L11 3L19 8L10 17L2 14Z" fill="#7a6f60"/><path d="M2 11L11 3L19 8L10 14Z" fill="#b5a58f" stroke="#54493a"/></svg></button>
    <button class="on" aria-label="Nord"><svg viewBox="0 0 20 20"><circle cx="10" cy="10" r="8.500" fill="none" stroke="#54493a" stroke-width="1.300"/><text x="10" y="14" text-anchor="middle" class="north">N</text></svg></button>
  </div>
  <div class="more3"><button aria-label="Mehr"><svg viewBox="0 0 8 16" width="8" height="16" fill="#444"><path d="M2 1H5V4H2ZM2 6.500H5V9.500H2ZM2 12H5V15H2Z"/></svg></button></div>
  <div class="bar icons second-row">
    <button aria-label="Lineal"><svg viewBox="0 0 20 20"><path d="M3 6H17V14H3Z" fill="#fafbfd" stroke="#667" stroke-width="1.400"/><path d="M6 14V10M8.500 14V11M11 14V10M13.500 14V11" stroke="#667"/></svg></button>
    <button class="on" aria-label="Abstand"><svg viewBox="0 0 20 20" fill="none" stroke="#333"><path d="M7 4H17V13H7Z" stroke="#d98a2b"/><path d="M3 2V15M1 2H5M1 15H5M7 17.500H17M7 15.500V19M17 15.500V19" stroke-width="1.300"/></svg></button>
    <button aria-label="Rückgängig"><svg viewBox="0 0 20 20"><path d="M5 3V17M15 3V17M2 6H18M2 14H18" stroke="#b8c6e0"/><path d="M5 7L10 3V6Q16 7 14 16Q13 10 10 9V12Z" fill="#34465c" stroke="#34465c"/></svg></button>
    <button aria-label="Löschen"><svg viewBox="0 0 20 20"><path d="M3 3H17V17H3Z" fill="#eef2fa" stroke="#8ea3cc"/><path d="M8 8L12 12M12 8L8 12" stroke="#d22" stroke-width="1.600"/></svg></button>
    <button aria-label="Ursprung"><svg viewBox="0 0 20 20"><path d="M3 3H17V17H3Z" fill="#eef2fa" stroke="#8ea3cc"/><path d="M7 7V12H12M10.500 10L13 12L10.500 14" fill="none" stroke="#345" stroke-width="1.300"/></svg></button>
    <button aria-label="Stern"><svg viewBox="0 0 20 20"><path d="M3 3H17V17H3Z" fill="#f3edf2" stroke="#8ea3cc"/><path d="M10 3V17M3 10H17M4 4L16 16M16 4L4 16" stroke="#d33"/></svg></button>
    <button aria-label="Punktfang"><svg viewBox="0 0 20 20"><path d="M4 2V18M16 2V18M1 5H19M1 15H19M10 2V18M2 10H18" stroke="#bcc8e2"/><path d="M8 7.500H12.500V12H8Z" fill="#fff" stroke="#d33" stroke-width="1.500"/></svg></button>
    <button aria-label="Gitter"><svg viewBox="0 0 20 20"><path d="M3 2V18M6 2V18M9 2V18M12 2V18M15 2V18M18 2V18M2 3H19M2 6H19M2 9H19M2 12H19M2 15H19" stroke="#6f87bd"/></svg></button>
    <button class="on" aria-label="Ecke"><svg viewBox="0 0 20 20"><path d="M5 5H16V13" fill="none" stroke="#e0301e" stroke-width="1.600" stroke-dasharray="2 1"/><path d="M2 4H4V7H2M13 15H16V18" fill="none" stroke="#775"/></svg></button>
    <button aria-label="Kreuz"><svg viewBox="0 0 20 20"><path d="M3 3H17V17H3Z" fill="#f6faf8" stroke="#8ea3cc" stroke-width="1.300"/><path d="M10 3V17M3 10H17" stroke="#5aa05a" stroke-width="1.500"/></svg></button>
    <button class="on" aria-label="Cursor"><svg viewBox="0 0 20 20"><path d="M11 3H18V10H11Z" fill="#e8b868" stroke="#776"/><path d="M13 5L16 8M16 5L13 8" stroke="#222" stroke-width="1.300"/><path d="M4 6L12 13L8.500 13.500L10.500 18L8.500 18.500L7 14.500L4.500 16.500Z" fill="#ddd" stroke="#555"/></svg></button>
  </div>
</footer>
</body>
</html>
```
FILE: styles.css
```css
* { box-sizing: border-box; }
body {
  margin: 0;
  height: 100vh;
  display: flex;
  flex-direction: column;
  background: #d0d4dd;
  font: 11px/15px "Open Sans", "Noto Sans", sans-serif;
  color: #5c6067;
  overflow: hidden;
}
button { font: inherit; color: inherit; background: none; border: 0; padding: 0; margin: 0; }
svg { display: block; overflow: visible; }
.defs { position: absolute; width: 0; height: 0; }

/* Tab bar */
.tabbar { display: flex; height: 27px; border-top: 3px solid #fdfdfd; background: #d0d4dd; }
.app { width: 36px; height: 20px; margin: -3px 0 0 4px; z-index: 2; }
.tabs { display: flex; margin-left: 4px; }
.tabs button { height: 24px; padding: 0 12px; font-size: 11px; }
.tabs .on { color: #6a5a34; background: linear-gradient(#fbd98a, #fdeec4); border: 1px solid #eac878; border-bottom: 0; border-radius: 3px 3px 0 0; padding: 0 11px; }
.ctx { display: flex; margin-top: -3px; border-top: 2px solid #fbc24a; border-left: 1px solid #bcc1cc; }
.ctx button { padding-top: 2px; }
.ctx.blue { border-top-color: #7fa7dd; border-right: 1px solid #bcc1cc; }
.ctx.blue button { padding-left: 10px; }
.wintools { margin-left: auto; display: flex; gap: 6px; padding: 3px 0 0; }
.wintools svg { width: 16px; height: 16px; }
.wintools .near { margin-left: -4px; }

/* Ribbon */
.ribbon { display: flex; gap: 3px; height: 91px; padding: 1px 2px 2px; background: linear-gradient(#dfeef1, #f2f5f6 12px, #fff 60px, #fff 86px, #e4e6ea); border-bottom: 1px solid #b4b8c2; }
.group { display: flex; flex-direction: column; border: 1px solid #b1b5bd; border-color: #c9cdd4 #aaa #999 #c9cdd4; border-radius: 2px; }
.group h2 { margin: auto 0 0; height: 18px; font: 11px/18px "Open Sans", sans-serif; text-align: center; background: linear-gradient(#e9ebf2, #d2d6e0); }
.body { display: flex; padding: 1px 1px 0; height: 67px; }
.big { width: 41px; align-self: flex-start; padding-top: 2px; text-align: center; white-space: nowrap; }
.big svg { width: 30px; height: 30px; margin: 0 auto 5px; }
.big.mid { width: 44px; }
.big.insert { width: 46px; }
.big.wide { width: 54px; }
.sep { width: 1px; height: 44px; margin: 11px 1px 0; background: #c9ccd3; }
.col { display: flex; flex-direction: column; }
.body.col { padding: 1px 2px 0; }
.row { display: flex; align-items: center; gap: 1px; height: 21px; padding: 0 2px 0 0; white-space: nowrap; align-self: flex-start; }
.row svg { width: 18px; height: 18px; }
.row:disabled { color: #a2a4a8; }
.row.sel { border: 1px solid #c49a52; background: linear-gradient(#f7cf9c, #fbb254 50%, #fde084); }
.dd { display: inline-block; border: 3px solid transparent; border-top: 4px solid #666; border-bottom: 0; margin-left: 2px; }
.dd.lg { border-width: 5px 5px 0; margin-left: 0; }
.ictext { font: 11px "Open Sans", sans-serif; fill: #444; }

/* Docked strips */
.dock { display: flex; flex-direction: column; align-items: flex-start; height: 60px; border-bottom: 1px solid #8a8a8a; }
.strip { height: 29px; padding: 7px 4px 0 10px; background: linear-gradient(90deg, #e4e9f4, #dde2ed); border-bottom: 1px solid #c3c8d2; position: relative; margin-bottom: 1px; }
.strip::before, .bar::before { content: ""; position: absolute; left: 2px; top: 7px; bottom: 7px; border-left: 2px dotted #aab0bc; }

/* Work area */
.work { flex: 1; min-height: 0; display: grid; grid-template-columns: minmax(0, 1fr) 397px 43px; }
.canvas { background: #fff; display: flex; flex-direction: column; min-height: 0; border-left: 1px solid #999; }
.plan { flex: 1; min-height: 0; width: 100%; overflow: hidden; font-family: "Liberation Sans", Arial, sans-serif; }
.thin { fill: none; stroke: #333; stroke-width: .9; }
.dash { stroke-dasharray: 6 5; }
.roof { fill: none; stroke: #777; stroke-width: 1; stroke-dasharray: 6 5; }
.ridge { stroke: #333; stroke-width: 2; stroke-dasharray: 6 5; }
.wall-line { stroke: #000; stroke-width: 3.5; }
.room { font-size: 15px; fill: #111; }
.area { font-size: 11px; fill: #222; }
.brh { font-size: 7px; fill: #333; text-anchor: middle; }
.dim { font-size: 10px; fill: #222; text-anchor: middle; }
.sup { font-size: 6px; }
.note { fill: #c80000; font-size: 22px; font-weight: bold; }
.hscroll { display: flex; height: 16px; margin-bottom: 2px; background: #f0f0f0; }
.hscroll button { width: 16px; font-size: 8px; }
.track { flex: 1; display: flex; }
.thumb { margin-left: 42%; width: 46%; background: #cdcdcd; }

/* Panels */
.panels { background: #fff; padding: 2px 4px 0 7px; position: relative; font: 10px/13px "DejaVu Sans Condensed", "Noto Sans", sans-serif; color: #222; }
.panels::before { content: ""; position: absolute; left: 2px; top: 4px; bottom: 3px; border-left: 2px dotted #b7bac2; }
.panel { background: #f0f0f0; border-bottom: 1px solid #d8d8d8; margin-bottom: 3px; }
.panel header { height: 18px; display: flex; align-items: center; color: #f2f6fa; background: linear-gradient(#b5cfe8, #98b6d6); }
.panel:first-child header { border-top: 2px solid #f0a04a; }
.panel + .panel header { height: 15px; }
.panel h3 { flex: 1; margin: 0; text-align: center; font: bold 11px/15px "Liberation Sans", sans-serif; }
.ctl { display: flex; gap: 5px; }
.ctl svg { width: 10px; height: 10px; }
.ptabs { display: flex; height: 19px; }
.ptabs button { font: bold 11px/17px "Liberation Sans", sans-serif; color: #111; padding: 0 5px 0 4px; border: 1px solid #e2e2e2; border-bottom: 0; }
.ptabs .on { background: #fff; border-color: #fff; padding: 0 5px; }
.ptools { display: flex; gap: 6px; height: 26px; padding: 1px 12px 0 4px; border-top: 1px solid #dcdcdc; }
.ptools button { width: 26px; height: 23px; position: relative; }
.ptools .m { position: absolute; left: 0; top: 0; width: 7px; height: 7px; z-index: 1; }
.ptools .f { width: 20px; height: 18px; margin: 2px 0 0 3px; }
.ptools .raised { box-shadow: 0 0 3px #888; background: #eceef1; }
.ptools .more { width: 16px; height: 10px; margin: 6px 0 0 auto; }
.tablebox { margin: 0 3px; padding: 1px 0 0; min-height: 280px; background: #fff; border: 1px solid #a5a8ae; border-top-color: #888; position: relative; }
table { width: 100%; border-collapse: collapse; table-layout: fixed; }
.c1 { width: 15px; } .c2 { width: 17px; } .c5 { width: 52px; } .c6 { width: 64px; }
td { height: 16px; padding: 0; line-height: 15px; white-space: nowrap; border-bottom: 1px solid #efefef; border-right: 1px solid #efefef; }
td:nth-child(4) { border-right: 0; }
td svg { width: 14px; height: 14px; }
.b { background: #d5d0c8; border-color: #fff; box-shadow: inset 0 1px #9b978f; }
.g { background: #f0f0f0; }
.ch { padding-left: 17px; }
.n { text-align: right; padding-right: 5px; }
.t svg { margin-left: 1px; }
.cur td { background: #7db9ea; border-bottom-color: #222; }
.cur .b { background: #5f9dcb; }
.cur .g { background: #0078d7; color: #fff; }
.cur td:last-child { background: #fff; border-bottom-color: #efefef; }
.layers { color: #fa1414; }
.layers .all, .layers .act { color: #222; }
.act td { background: #bfdcf3; }
.act .b { background: #9db9cc; }
.act .g { background: #f0f0f0; }
.act td:last-child { background: #fff; }
.last td { border-bottom-color: #222; }
.last td:last-child { border-bottom-color: #efefef; }
.mark { position: absolute; left: -2px; border: 3px solid #c80000; box-shadow: 2px 2px 3px rgba(0,0,0,.4); }
.one { top: -3px; width: 358px; height: 85px; }
.two { top: 79px; width: 360px; height: 73px; }
.pfoot { display: flex; align-items: flex-start; height: 47px; padding: 10px 0 0 11px; }
.pfoot select { width: 105px; height: 20px; margin-top: 1px; }
.pfoot label { width: 57px; white-space: nowrap; }
.pfoot .second { width: 61px; margin-left: 4px; }
.pfoot .short { width: 95px; }
.pfoot .narrow { width: 49px; }
.pfoot .third { width: 58px; margin-left: 12px; }
select {
  appearance: none;
  font: inherit;
  color: #222;
  padding: 0 14px 0 3px;
  border: 1px solid #adadad;
  border-radius: 0;
  background: #e1e1e1 url("data:image/svg+xml,%3Csvg xmlns='http://www.w3.org/2000/svg' width='9' height='6'%3E%3Cpath d='M1 1L4.500 4.500L8 1' fill='none' stroke='%23555'/%3E%3C/svg%3E") no-repeat right 4px center;
}
.pfoot.blue select { background-color: #e5f1fb; border-color: #3c99dc; }

/* Side buttons */
.side { padding: 2px 0 0 1px; }
.side button { display: flex; align-items: center; justify-content: center; width: 100%; height: 41px; background: linear-gradient(90deg, #e4e9f4, #dde2ed); }
.side button:first-child { height: 46px; padding-top: 3px; border-top: 1px dotted #99a; }
.side .on { background: linear-gradient(#fdd9a8, #fdb254 45%, #fee88c); border: 1px solid #d8b878; }
.side svg { width: 30px; height: 30px; }
.side button:first-child svg { height: 36px; }
.pro { font: bold 11px "Open Sans", sans-serif; fill: #fff; }

/* Status bar */
.status { display: flex; height: 31px; border-bottom: 3px solid #e9eaee; }
.bar, .more3 { position: relative; display: flex; align-items: center; height: 28px; background: linear-gradient(#e8ecf6, #d3d8e3); border-right: 1px solid #c2c6d0; border-bottom: 1px solid #b0b4bf; padding-left: 10px; flex: none; }
.bar label { white-space: nowrap; }
.fields { width: 537px; gap: 4px; }
.fields select { flex: 1; min-width: 0; }
.status select {
  height: 20px;
  padding-left: 2px;
  border: 1px solid #e6e9f0;
  background-color: #fff;
  background-image: url("data:image/svg+xml,%3Csvg xmlns='http://www.w3.org/2000/svg' width='13' height='20'%3E%3Crect width='13' height='20' fill='%23e2e6ef'/%3E%3Cpath d='M4 8H9L6.500 12Z' fill='%23777'/%3E%3C/svg%3E");
  background-position: right 0 center;
}
.vs { width: 1px; height: 20px; background: #bcc1cc; margin: 0 2px; }
.coords { width: 454px; gap: 5px; }
.spin { display: flex; height: 22px; border: 1px solid #9a9a9a; background: #f0f0f0; }
.spin input { width: 66px; min-width: 0; border: 0; border-right: 1px solid #9a9a9a; background: none; font: inherit; color: #888; text-align: center; padding: 0 0 3px; }
.spin > span { display: flex; flex-direction: column; width: 17px; background: #f7f8fa; }
.spin button { flex: 1; font-size: 7px; line-height: 10px; }
.coords .mode { flex: 1; min-width: 0; margin-right: 3px; background-color: #f0f0f0; border-color: #bbb; }
.icons { width: 404px; padding-left: 7px; }
.icons button { flex: 1; height: 27px; display: flex; align-items: center; justify-content: center; }
.icons .on { background: linear-gradient(#fcd29b, #fdb659 45%, #fee787); border: 1px solid #cda869; }
.icons svg { width: 20px; height: 20px; }
.more3 { width: 34px; padding-left: 13px; }
.icons.second-row { width: 299px; padding-left: 8px; }
.tiny { font: bold 6px "Liberation Sans", sans-serif; fill: #111; }
.abc { font: bold 10px "Open Sans", sans-serif; fill: #5b6c78; }
.num { font: bold 9px "Open Sans", sans-serif; fill: #47647f; }
.ess { font: bold 14px "Liberation Sans", sans-serif; fill: #fff; }
.north { font: bold 11px "Liberation Sans", sans-serif; fill: #54493a; }
```
